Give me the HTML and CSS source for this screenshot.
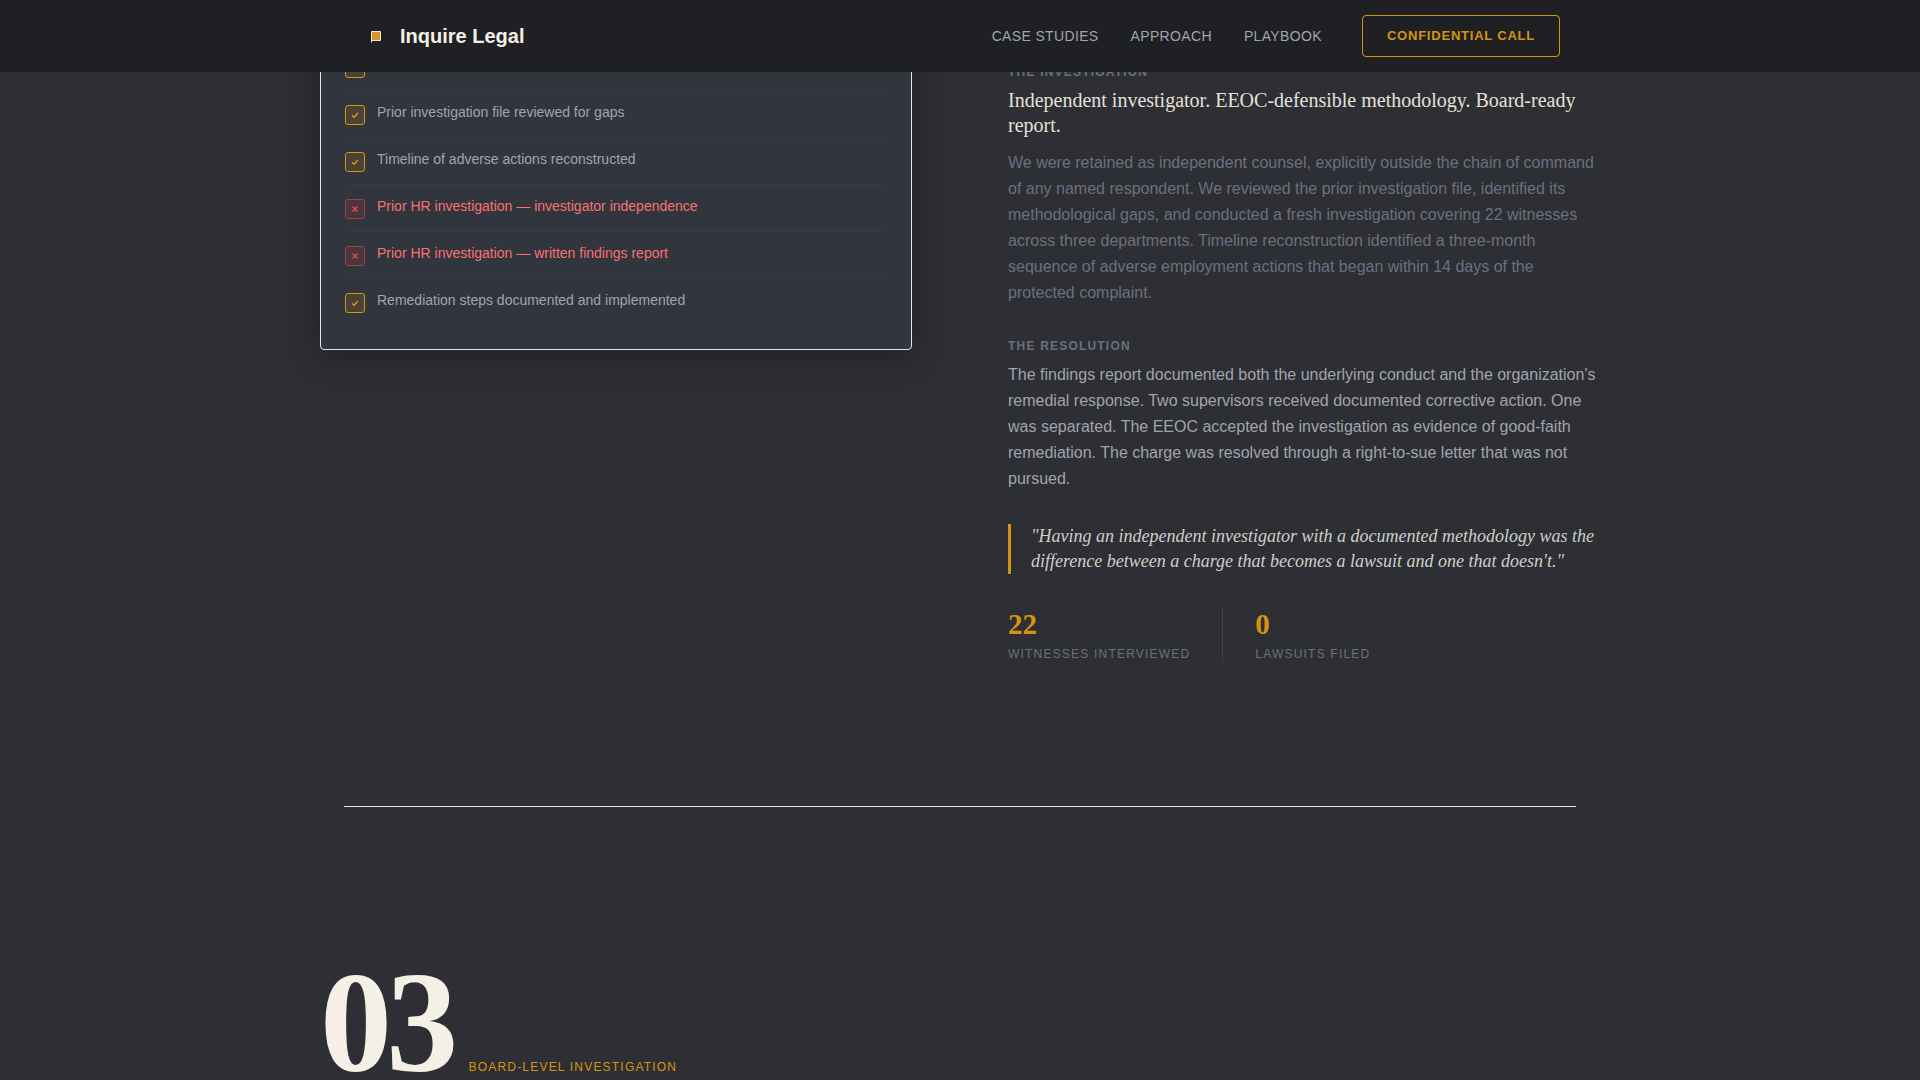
FILE: index.html
```html
<!DOCTYPE html>
<html lang="en">
<head>
  <meta charset="UTF-8">
  <meta name="viewport" content="width=device-width, initial-scale=1.0">
  <title>Inquire Legal</title>
  <link rel="stylesheet" href="styles.css">
</head>
<body>
  <header class="site-header">
    <div class="header-inner">
      <a class="logo" href="#">
        <svg class="logo-mark" viewBox="0 0 32 32" aria-hidden="true">
          <path d="M11.5 22.500V11.500H20.500V20.500H12" fill="#d9952b" stroke="#f5e6d0" stroke-width="1"/>
        </svg>
        <span>Inquire Legal</span>
      </a>
      <nav class="main-nav">
        <a href="#cases">Case Studies</a>
        <a href="#approach">Approach</a>
        <a href="#playbook">Playbook</a>
        <a class="btn-call" href="#contact">Confidential Call</a>
      </nav>
    </div>
  </header>

  <main id="cases">
    <article class="case">
      <div class="case-visual">
        <ul class="checklist">
          <li>
            <span class="mark"></span>
          </li>
          <li>
            <span class="mark"><svg viewBox="0 0 10 10"><path d="M2 5.300L4 7.300L8 3"/></svg></span>
            <span>Prior investigation file reviewed for gaps</span>
          </li>
          <li>
            <span class="mark"><svg viewBox="0 0 10 10"><path d="M2 5.300L4 7.300L8 3"/></svg></span>
            <span>Timeline of adverse actions reconstructed</span>
          </li>
          <li class="failed">
            <span class="mark"><svg viewBox="0 0 10 10"><path d="M2.500 2.500L7.500 7.500M7.500 2.500L2.500 7.500"/></svg></span>
            <span>Prior HR investigation — investigator independence</span>
          </li>
          <li class="failed">
            <span class="mark"><svg viewBox="0 0 10 10"><path d="M2.500 2.500L7.500 7.500M7.500 2.500L2.500 7.500"/></svg></span>
            <span>Prior HR investigation — written findings report</span>
          </li>
          <li>
            <span class="mark"><svg viewBox="0 0 10 10"><path d="M2 5.300L4 7.300L8 3"/></svg></span>
            <span>Remediation steps documented and implemented</span>
          </li>
        </ul>
      </div>

      <div class="case-body">
        <section class="block">
          <h3 class="label">The Investigation</h3>
          <p class="lead">Independent investigator. EEOC-defensible methodology. Board-ready report.</p>
          <p class="text muted">We were retained as independent counsel, explicitly outside the chain of command of any named respondent. We reviewed the prior investigation file, identified its methodological gaps, and conducted a fresh investigation covering 22 witnesses across three departments. Timeline reconstruction identified a three-month sequence of adverse employment actions that began within 14 days of the protected complaint.</p>
        </section>
        <section class="block">
          <h3 class="label">The Resolution</h3>
          <p class="text">The findings report documented both the underlying conduct and the organization's remedial response. Two supervisors received documented corrective action. One was separated. The EEOC accepted the investigation as evidence of good-faith remediation. The charge was resolved through a right-to-sue letter that was not pursued.</p>
        </section>
        <blockquote class="quote">"Having an independent investigator with a documented methodology was the difference between a charge that becomes a lawsuit and one that doesn't."</blockquote>
        <div class="stats">
          <div class="stat">
            <span class="stat-value">22</span>
            <span class="stat-label">Witnesses Interviewed</span>
          </div>
          <div class="stat">
            <span class="stat-value">0</span>
            <span class="stat-label">Lawsuits Filed</span>
          </div>
        </div>
      </div>
    </article>

    <hr class="divider">

    <article class="case-heading">
      <span class="case-number">03</span>
      <h2 class="case-type">Board-Level Investigation</h2>
    </article>
  </main>
</body>
</html>
```

FILE: styles.css
```css
* {
  box-sizing: border-box;
  margin: 0;
  padding: 0;
}
body {
  background-color: #2d2f34;
  color: #a1a4ad;
  font-family: "Liberation Sans", Arial, sans-serif;
  font-size: 16px;
  line-height: 26px;
}
a {
  color: inherit;
  text-decoration: none;
}

/* Header */
.site-header {
  position: fixed;
  top: 0;
  left: 0;
  right: 0;
  z-index: 10;
  background-color: #1f2023;
}
.header-inner {
  display: flex;
  align-items: center;
  justify-content: space-between;
  height: 72px;
  max-width: 1280px;
  margin: 0 auto;
  padding: 0 40px;
}
.logo {
  display: flex;
  align-items: center;
  gap: 8px;
  color: #f5f0e6;
  font-size: 20px;
  font-weight: bold;
}
.logo-mark {
  width: 32px;
  height: 32px;
}
.main-nav {
  display: flex;
  align-items: center;
  gap: 32px;
  font-size: 14px;
  letter-spacing: 0.025em;
  text-transform: uppercase;
}
.main-nav .btn-call {
  margin-left: 8px;
  padding: 7px 24px;
  border: 1px solid #d4940f;
  border-radius: 4px;
  color: #d4940f;
  font-size: 13px;
  font-weight: bold;
  letter-spacing: 0.06em;
}

/* Case study */
main {
  max-width: 1280px;
  margin: 0 auto;
}
.case {
  display: grid;
  grid-template-columns: 1fr 1fr;
  gap: 96px;
  align-items: start;
  padding: 19px 0 144px;
}
.case-visual {
  padding: 24px;
  border: 1px solid #e5e7eb;
  border-radius: 4px;
  background-color: #31353d;
  box-shadow: 0 8px 32px rgba(0, 0, 0, 0.3);
}
.checklist {
  list-style: none;
}
.checklist li {
  display: flex;
  align-items: flex-start;
  gap: 12px;
  padding: 12px 0;
  border-bottom: 1px solid #383b43;
  font-size: 14px;
  line-height: 18px;
}
.checklist li:last-child {
  border-bottom: none;
}
.mark {
  display: flex;
  align-items: center;
  justify-content: center;
  width: 20px;
  height: 20px;
  margin-top: 2px;
  border: 1px solid #d4940f;
  border-radius: 3px;
  background-color: #4a4236;
  color: #d4940f;
}
.mark svg {
  width: 10px;
  height: 10px;
  fill: none;
  stroke: currentColor;
  stroke-width: 1.5;
}
.failed {
  color: #f87171;
}
.failed .mark {
  border-color: #a83c45;
  background-color: #48353d;
  color: #e5484d;
}

.case-body {
  padding-top: 45px;
}
.block {
  margin-bottom: 32px;
}
.label {
  margin-bottom: 8px;
  color: #6b7080;
  font-size: 12px;
  line-height: 16px;
  letter-spacing: 0.1em;
  text-transform: uppercase;
}
.lead {
  margin-bottom: 12px;
  color: #e4e1da;
  font-family: "Liberation Serif", "Times New Roman", serif;
  font-size: 20px;
  line-height: 25px;
}
.muted {
  color: #6b7080;
}
.quote {
  margin-bottom: 32px;
  padding-left: 20px;
  border-left: 3px solid #d4940f;
  color: #d0cec9;
  font-family: "Liberation Serif", "Times New Roman", serif;
  font-size: 18px;
  font-style: italic;
  line-height: 25px;
}

.stats {
  display: flex;
}
.stat {
  display: flex;
  flex-direction: column;
  gap: 4px;
}
.stat + .stat {
  margin-left: 32px;
  padding-left: 32px;
  border-left: 1px solid #3f4148;
}
.stat-value {
  color: #d4940f;
  font-family: "Liberation Serif", "Times New Roman", serif;
  font-size: 29px;
  font-weight: bold;
  line-height: 36px;
}
.stat-label {
  color: #6b7080;
  font-size: 12px;
  line-height: 16px;
  letter-spacing: 0.1em;
  text-transform: uppercase;
}

.divider {
  height: 1px;
  margin: 0 24px;
  border: none;
  background-color: #e5e7eb;
}

/* Next case */
.case-heading {
  display: flex;
  align-items: baseline;
  gap: 16px;
  padding-top: 144px;
}
.case-number {
  color: #f5f0e6;
  font-family: "Liberation Serif", "Times New Roman", serif;
  font-size: 144px;
  font-weight: bold;
  line-height: 144px;
  letter-spacing: -0.04em;
}
.case-type {
  color: #d4940f;
  font-size: 12px;
  font-weight: normal;
  line-height: 16px;
  letter-spacing: 0.1em;
  text-transform: uppercase;
}
```
